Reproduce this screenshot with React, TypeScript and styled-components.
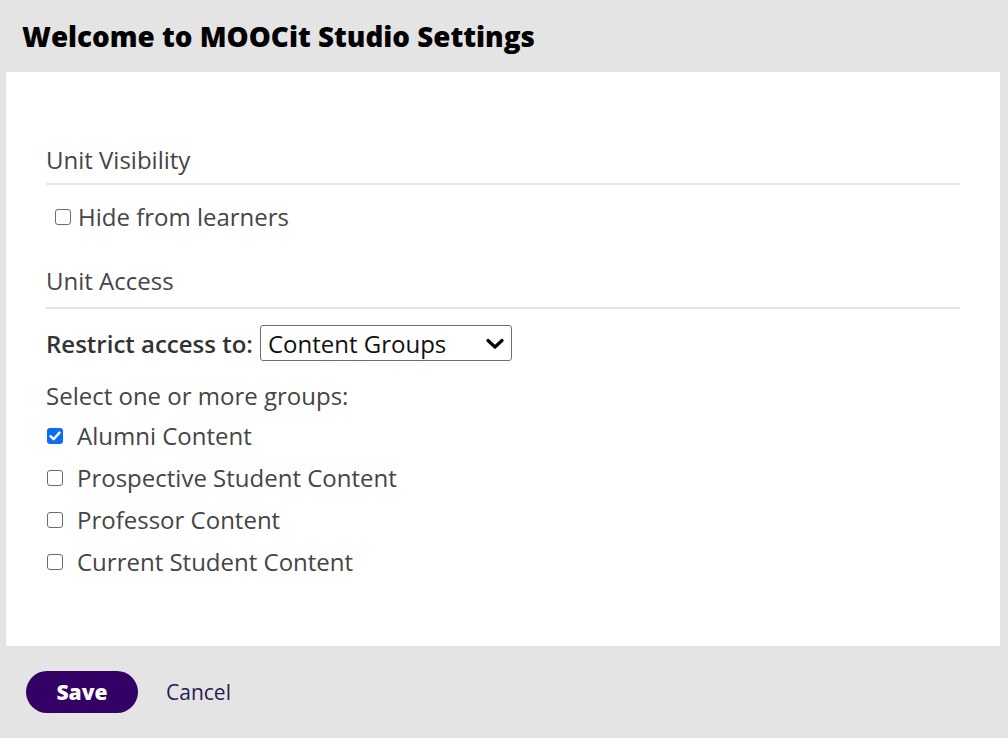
import React, { useState } from "react";
import styled, { createGlobalStyle } from "styled-components";

const Global = createGlobalStyle`
  html, body { margin: 0; padding: 0; background: #e4e4e4; }
  body { font-family: "Open Sans", "Liberation Sans", sans-serif; }
  * { box-sizing: border-box; }
`;

const Modal = styled.div`
  width: 1008px;
  height: 738px;
  background: #e4e4e4;
  display: flex;
  flex-direction: column;
`;

const Header = styled.header`
  height: 72px;
  display: flex;
  align-items: center;
  padding: 0 22px;
`;

const Title = styled.h1`
  margin: 0;
  font-family: "Open Sans", sans-serif;
  font-weight: 800;
  font-size: 27.8px;
  line-height: 36px;
  color: #000;
`;

const Body = styled.div`
  background: #fff;
  margin: 0 8px 0 6px;
  height: 574px;
  padding: 72px 40px 0 40px;
  display: flex;
  flex-direction: column;
  color: #454545;
  font-size: 24px;
`;

const SectionTitle = styled.div<{ $top?: number; $pad?: number }>`
  font-size: 24px;
  line-height: 32px;
  margin-top: ${(p) => p.$top ?? 0}px;
  padding-bottom: ${(p) => p.$pad ?? 7}px;
  border-bottom: 2px solid #e6e6e6;
  color: #454545;
`;

const Row = styled.label<{ $indent?: number; $gap?: number; $top?: number }>`
  display: flex;
  align-items: center;
  gap: ${(p) => p.$gap ?? 14}px;
  padding-left: ${(p) => p.$indent ?? 0}px;
  margin-top: ${(p) => p.$top ?? 0}px;
  height: 42px;
  line-height: 32px;
  color: #454545;
  cursor: pointer;
`;

const HiddenInput = styled.input.attrs({ type: "checkbox" })`
  position: absolute;
  opacity: 0;
  width: 0;
  height: 0;
  margin: 0;
`;

const Box = styled.span<{ $on: boolean }>`
  width: 16px;
  height: 16px;
  flex-shrink: 0;
  border-radius: 3px;
  border: ${(p) => (p.$on ? "none" : "1.5px solid #6b6b6b")};
  background: ${(p) => (p.$on ? "#0b6cf5" : "#fff")};
  display: flex;
  align-items: center;
  justify-content: center;
`;

function Checkbox({ checked, onChange }: { checked: boolean; onChange: () => void }) {
  return (
    <>
      <HiddenInput checked={checked} onChange={onChange} />
      <Box $on={checked}>
        {checked && (
          <svg width="12" height="10" viewBox="0 0 12 10">
            <path d="M1.5 5.2 L4.6 8.2 L10.5 1.6" fill="none" stroke="#fff" strokeWidth="2.4" strokeLinecap="round" strokeLinejoin="round" />
          </svg>
        )}
      </Box>
    </>
  );
}

const SelectWrap = styled.div`
  position: relative;
  display: inline-flex;
`;

const Select = styled.select`
  font-family: "Open Sans", sans-serif;
  font-size: 24px;
  color: #111;
  height: 36px;
  width: 252px;
  padding: 0 7px;
  border: 1px solid #6f6f6f;
  border-radius: 3px;
  background: #fff;
  appearance: none;
`;

const Chevron = styled.svg`
  position: absolute;
  right: 8px;
  top: 13px;
  pointer-events: none;
`;

const Strong = styled.span`
  font-weight: 600;
  color: #333;
`;

const RestrictRow = styled.div`
  display: flex;
  align-items: center;
  gap: 7px;
  height: 36px;
  margin-top: 16px;
`;

const Prompt = styled.div`
  margin-top: 19px;
  line-height: 32px;
  margin-bottom: 3px;
`;

const Footer = styled.footer`
  flex: 1;
  display: flex;
  align-items: center;
  padding: 0 26px;
  gap: 28px;
`;

const SaveButton = styled.button`
  width: 112px;
  height: 42px;
  border-radius: 21px;
  border: none;
  background: #330066;
  color: #fff;
  font-family: "Open Sans", sans-serif;
  font-weight: 800;
  font-size: 21px;
`;

const CancelLink = styled.a`
  font-size: 21px;
  color: #2b1a55;
  text-decoration: none;
`;

const groups = [
  "Alumni Content",
  "Prospective Student Content",
  "Professor Content",
  "Current Student Content",
];

export default function App() {
  const [checked, setChecked] = useState<Record<string, boolean>>({ "Alumni Content": true });
  const [hidden, setHidden] = useState(false);
  return (
    <>
      <Global />
      <Modal>
        <Header>
          <Title>Welcome to MOOCit Studio Settings</Title>
        </Header>
        <Body>
          <SectionTitle>Unit Visibility</SectionTitle>
          <Row $indent={9} $gap={7} $top={11}>
            <Checkbox checked={hidden} onChange={() => setHidden((h) => !h)} />
            Hide from learners
          </Row>
          <SectionTitle $top={27} $pad={10}>Unit Access</SectionTitle>
          <RestrictRow>
            <Strong>Restrict access to:</Strong>
            <SelectWrap>
              <Select defaultValue="cg">
                <option value="cg">Content Groups</option>
              </Select>
              <Chevron width="18" height="12" viewBox="0 0 18 12">
                <path d="M2 2.5 L9 9 L16 2.5" fill="none" stroke="#000" strokeWidth="3.2" strokeLinecap="round" strokeLinejoin="round" />
              </Chevron>
            </SelectWrap>
          </RestrictRow>
          <Prompt>Select one or more groups:</Prompt>
          {groups.map((g) => (
            <Row key={g} $indent={1}>
              <Checkbox
                checked={!!checked[g]}
                onChange={() => setChecked((c) => ({ ...c, [g]: !c[g] }))}
              />
              {g}
            </Row>
          ))}
        </Body>
        <Footer>
          <SaveButton>Save</SaveButton>
          <CancelLink href="#">Cancel</CancelLink>
        </Footer>
      </Modal>
    </>
  );
}
